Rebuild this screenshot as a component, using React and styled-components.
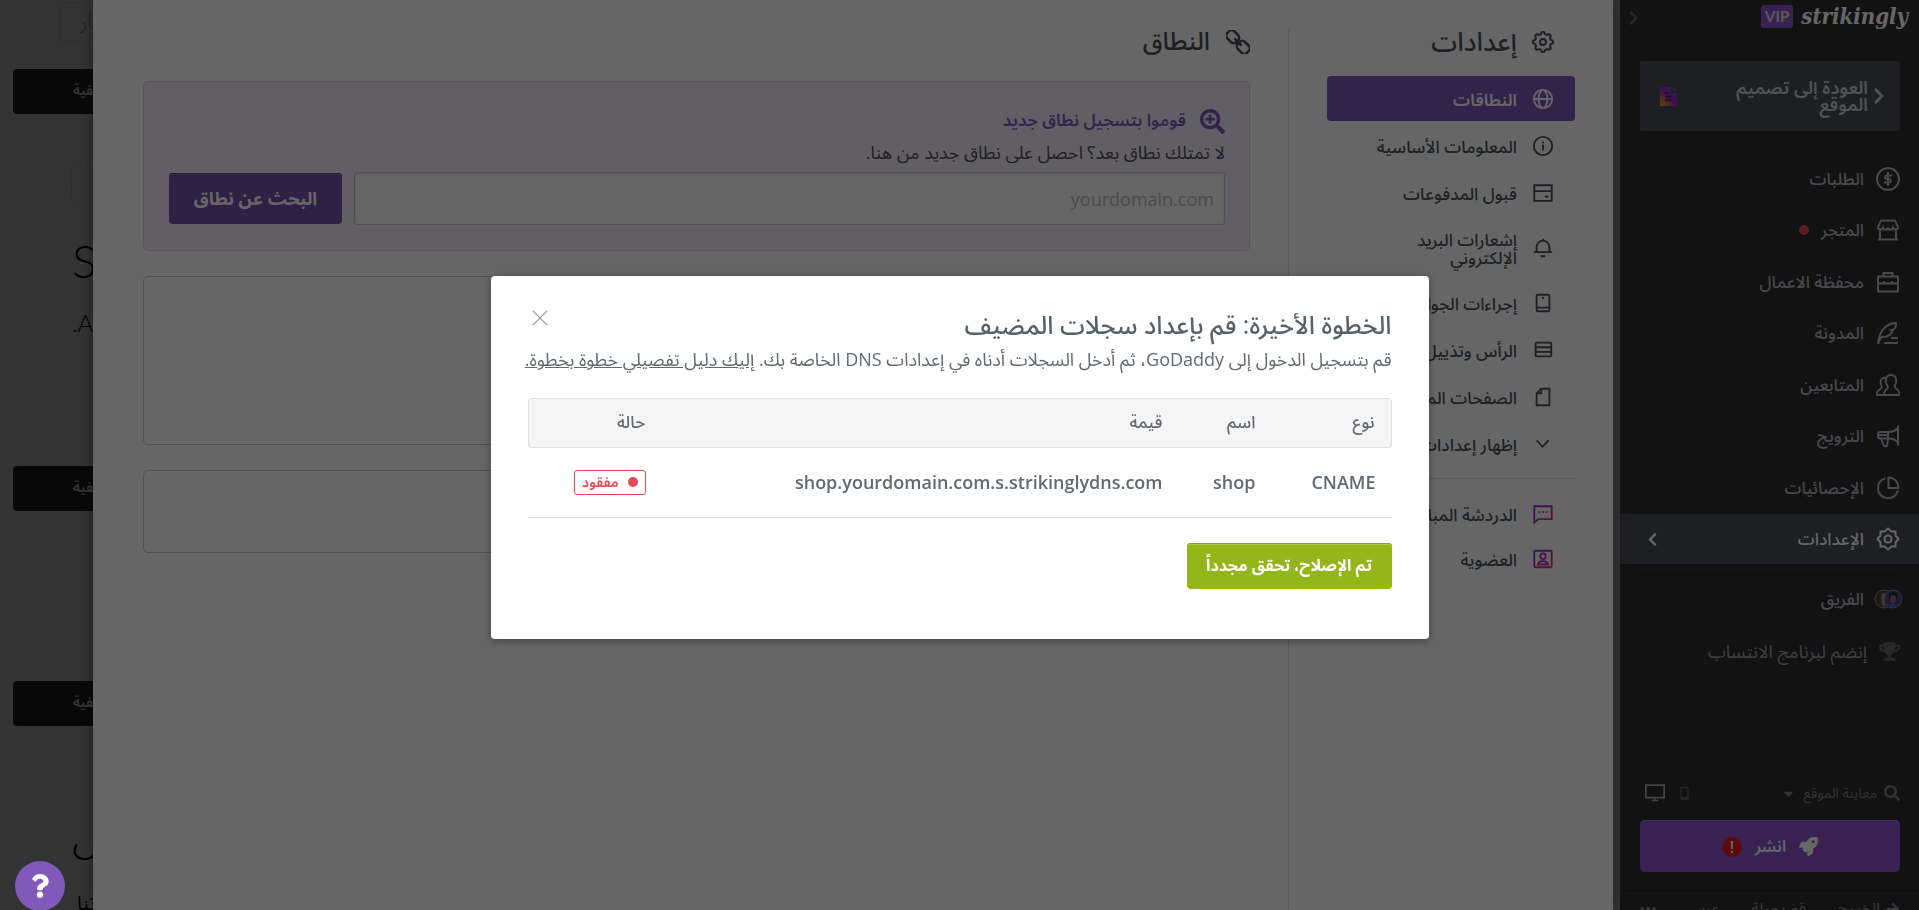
import React from 'react';
import styled, { createGlobalStyle } from 'styled-components';
import {
  FaTrophy,
  FaSearch,
  FaSearchPlus,
  FaRocket,
  FaCaretDown,
  FaMobileAlt,
  FaArrowRight,
  FaChevronLeft,
  FaChevronRight,
  FaQuestion,
} from 'react-icons/fa';

const cogPath = (() => {
  const points = [];
  for (let i = 0; i < 96; i++) {
    const a = (i / 96) * Math.PI * 2;
    const r = 9 + 1.1 * Math.tanh(2 * Math.cos(8 * a));
    points.push(`${(12 + r * Math.sin(a)).toFixed(2)} ${(12 - r * Math.cos(a)).toFixed(2)}`);
  }
  return `M${points.join('L')}Z`;
})();

const Icon = ({ size = 24, stroke = 2, color = 'currentColor', children }) => (
  <svg
    width={size}
    height={size}
    viewBox="0 0 24 24"
    fill="none"
    stroke={color}
    strokeWidth={stroke}
    aria-hidden="true"
  >
    {children}
  </svg>
);

const OrdersIcon = () => (
  <Icon>
    <circle cx="12" cy="12" r="11" />
    <path d="M16 8.5H10.5a1.8 1.8 0 0 0 0 3.5h3a1.8 1.8 0 0 1 0 3.500H8M12 5v14" />
  </Icon>
);
const StoreIcon = () => (
  <Icon>
    <path d="M5 2.500h14l3 6.500c0 3-4 3.500-5 .5c-1 3-4.500 3-5 0c-.5 3-4 3-5 0c-1 3-5 2.500-5-.5zM4 12v9.500M20 12v9.500M2 21.500h20" />
  </Icon>
);
const PortfolioIcon = () => (
  <Icon>
    <path d="M2 6.500h20v15H2zM7.500 6.500V3h9v3.500M2 13.500h20M8 11v3M16 11v3" />
  </Icon>
);
const BlogIcon = () => (
  <Icon>
    <path d="M2 23C3 11 9 2.500 20 2c.5 3-.5 5-3 7h-2l1 2c-2 4-6 5-10 5c-2 1-3 4-4 7M8 22h14M15 17h7" />
  </Icon>
);
const AudienceIcon = () => (
  <Icon stroke={1.8}>
    <path d="M11 12c-2-3-2-10 4-10s6 7 4 10c-1 2 0 3 1.500 4c2 1 3 2 3 6H8c0-4 1-5 3-6c1.500-1 1-2 0-4z" />
    <path d="M10 5C5 3.500 3.500 9 5.500 13c1 2-1 3-2.500 4c-2 1-2 2-2.500 5H8" />
  </Icon>
);
const PromoteIcon = () => (
  <Icon>
    <path d="M22 1.500v20M22 4c-3 3-6 4-9 4H4a2 2 0 0 0-2 2v2.500a2 2 0 0 0 2 2h9c3 0 6 1 9 4M12 8v6.500M2 11h10M5 14.500l3 7.500h3l1-7" />
  </Icon>
);
const StatsIcon = () => (
  <Icon>
    <path d="M9.500 2.200A10.200 10.200 0 1 0 22 14.500M12.500 1.500V12H22.500A10 10 0 0 0 12.500 1.500z" />
  </Icon>
);
const SettingsIcon = () => (
  <Icon>
    <path d="M12 1.500L15.500 4.500H19.500V8.500L22.500 12L19.500 15.500V19.500H15.500L12 22.500L8.500 19.500H4.500V15.500L1.500 12L4.500 8.500V4.500H8.500Z" />
    <circle cx="12" cy="12" r="3.500" />
  </Icon>
);
const CogIcon = () => (
  <Icon>
    <path d={cogPath} />
    <circle cx="12" cy="12" r="3" />
  </Icon>
);
const GlobeIcon = () => (
  <Icon size={22}>
    <circle cx="12" cy="12" r="10" />
    <path d="M2 12h20M10.500 2C6 8 6 16 10.500 22M13.500 2c4.500 6 4.500 14 0 20" />
  </Icon>
);
const InfoIcon = () => (
  <Icon size={22}>
    <circle cx="12" cy="12" r="10" />
    <path d="M12 10.500V17M12 7v2" />
  </Icon>
);
const PaymentIcon = () => (
  <Icon size={22}>
    <path d="M2.500 3.500h19v17h-19zM2.500 10h19M14 16h4" />
  </Icon>
);
const BellIcon = () => (
  <Icon size={22}>
    <path d="M2 16.500h20M5 16.500V11a7 7 0 0 1 14 0v5.500M12 2v2M9.500 21h5" />
  </Icon>
);
const MobileActionsIcon = () => (
  <Icon size={22}>
    <rect x="5" y="3" width="14" height="18" rx="1" />
    <path d="M5 17h14M11 6.500h2" />
  </Icon>
);
const HeaderFooterIcon = () => (
  <Icon size={22}>
    <rect x="4" y="4" width="17" height="15" rx="1" />
    <path d="M4 9h17M4 14h17" />
  </Icon>
);
const PageIcon = () => (
  <Icon size={22}>
    <path d="M10 3h9v18H5V8zM10 3v5H5" />
  </Icon>
);
const DownIcon = () => (
  <Icon size={22}>
    <path d="M5 8l6.500 7L18 8" />
  </Icon>
);
const PinkGradient = ({ id }) => (
  <defs>
    <linearGradient id={id} x1="0" y1="0" x2="1" y2="1">
      <stop offset="0" stopColor="#8a2be2" />
      <stop offset="1" stopColor="#e8308a" />
    </linearGradient>
  </defs>
);
const ChatIcon = () => (
  <Icon size={22} color="url(#chat)">
    <PinkGradient id="chat" />
    <path d="M2.500 3.500h19v14H7l-4.500 4zM7 10h2M11 10h2M15 10h2" />
  </Icon>
);
const MembershipIcon = () => (
  <Icon size={22} color="url(#member)">
    <PinkGradient id="member" />
    <rect x="2.500" y="3" width="19" height="18" rx="1" />
    <circle cx="12" cy="9" r="3" />
    <path d="M6.500 18c1-5 10-5 11 0z" />
  </Icon>
);
const ChainIcon = () => (
  <Icon size={24} stroke={2.6}>
    <g transform="rotate(45 12 12)">
      <rect x="-2" y="7" width="13" height="10" rx="4" />
      <rect x="13" y="7" width="13" height="10" rx="4" />
      <path d="M7 12h10" />
    </g>
  </Icon>
);
const DesktopIcon = () => (
  <Icon size={20}>
    <path d="M1 2.500h22v15H1zM12 18v3M8 21h8" />
  </Icon>
);
const DocIcon = () => (
  <svg width="17" height="19" viewBox="0 0 17 19" aria-hidden="true">
    <defs>
      <linearGradient id="doc" x1="1" y1="0" x2="0" y2="1">
        <stop offset="0" stopColor="#3a6cf0" />
        <stop offset=".5" stopColor="#b01fc4" />
        <stop offset="1" stopColor="#f5b400" />
      </linearGradient>
    </defs>
    <path d="M0 0h11v6h6v13H0zM13 0l4 4h-4z" fill="url(#doc)" />
    <path d="M5 6h3M5 9.500h7M5 13h7" stroke="#3b2440" strokeWidth="1.500" />
  </svg>
);
const TeamIcon = () => (
  <svg width="29" height="20" viewBox="0 0 29 20" aria-hidden="true">
    <circle cx="10" cy="10" r="9" fill="#4a4342" stroke="#8a8a8f" />
    <path d="M8 5c3-3 6 1 4 5c2 3 0 6-2 8c-3-2-3-9-2-13z" fill="#b08d7e" />
    <circle cx="19" cy="10" r="9" fill="#474a80" stroke="#8a8a8f" />
    <path d="M15 6c1-4 8-4 8 0v4h-8z" fill="#1d2338" />
    <ellipse cx="19" cy="10" rx="3" ry="4" fill="#8b6b72" />
    <path d="M14 18c1-4 9-4 10 0z" fill="#3d62b8" />
  </svg>
);

const sideItems = [
  { label: 'الطلبات', icon: <OrdersIcon /> },
  { label: 'المتجر', icon: <StoreIcon />, dot: true },
  { label: 'محفظة الاعمال', icon: <PortfolioIcon /> },
  { label: 'المدونة', icon: <BlogIcon /> },
  { label: 'المتابعين', icon: <AudienceIcon /> },
  { label: 'الترويج', icon: <PromoteIcon /> },
  { label: 'الإحصائيات', icon: <StatsIcon /> },
  { label: 'الإعدادات', icon: <SettingsIcon />, active: true },
];

const settingItems = [
  { label: 'النطاقات', icon: <GlobeIcon />, active: true },
  { label: 'المعلومات الأساسية', icon: <InfoIcon /> },
  { label: 'قبول المدفوعات', icon: <PaymentIcon /> },
  { label: 'إشعارات البريد الإلكتروني', icon: <BellIcon />, tall: true },
  { label: 'إجراءات الجوال', icon: <MobileActionsIcon /> },
  { label: 'الرأس وتذييل', icon: <HeaderFooterIcon /> },
  { label: 'الصفحات المخصصة', icon: <PageIcon /> },
  { label: 'إظهار إعدادات', icon: <DownIcon /> },
];

const extraItems = [
  { label: 'الدردشة المباشرة', icon: <ChatIcon /> },
  { label: 'العضوية', icon: <MembershipIcon /> },
];

function EditorPage() {
  return (
    <Canvas aria-hidden="true">
      <DashedBox $top={2} $left={59} $height={40}>شعار</DashedBox>
      <BackgroundButton $top={27}>الخلفية</BackgroundButton>
      <DashedBox $top={50} $left={71} $height={39} />
      <BigText>S</BigText>
      <MidText>.A</MidText>
      <BackgroundButton $top={130}>الخلفية</BackgroundButton>
      <BackgroundButton $top={170}>الخلفية</BackgroundButton>
      <ArabicTitle>س</ArabicTitle>
      <ArabicText>تنا</ArabicText>
    </Canvas>
  );
}

function Sidebar() {
  return (
    <SideWrapper>
      <LogoRow>
        <Logo>strikingly</Logo>
        <Vip>VIP</Vip>
        <Collapse aria-label="طي القائمة">
          <FaChevronRight size={16} />
        </Collapse>
      </LogoRow>
      <BackCard href="#design">
        <FaChevronRight size={18} />
        <span>العودة إلى تصميم الموقع</span>
        <DocIcon />
      </BackCard>
      <SideNav>
        {sideItems.map((item) => (
          <SideLink key={item.label} href="#nav" $active={item.active}>
            {item.icon}
            <span>{item.label}</span>
            {item.dot && <Dot $size={10} />}
            {item.active && <FaChevronLeft size={15} />}
          </SideLink>
        ))}
      </SideNav>
      <SideLine />
      <SideLink href="#team">
        <TeamSlot>
          <TeamIcon />
        </TeamSlot>
        <span>الفريق</span>
      </SideLink>
      <SideLink href="#affiliate" $light>
        <FaTrophy size={21} />
        <span>إنضم لبرنامج الانتساب</span>
      </SideLink>
      <SideBottom>
        <PreviewRow>
          <FaSearch size={16} />
          <span>معاينة الموقع</span>
          <FaCaretDown size={15} />
          <Devices>
            <FaMobileAlt size={13} />
            <DesktopIcon />
          </Devices>
        </PreviewRow>
        <Publish>
          <FaRocket size={19} />
          انشر
          <Warn>!</Warn>
        </Publish>
        <SideFooter>
          <a href="#logout">
            <FaArrowRight size={14} /> الخروج
          </a>
          <a href="#tour">قم بجولة</a>
          <a href="#lang">عربي</a>
          <a href="#more">•••</a>
        </SideFooter>
      </SideBottom>
    </SideWrapper>
  );
}

function SettingsPanel() {
  return (
    <Panel>
      <SettingsNav>
        <NavTitle>
          <CogIcon />
          إعدادات
        </NavTitle>
        <NavGroup $gap={2}>
          {settingItems.map((item) => (
            <NavLink key={item.label} href="#setting" $active={item.active} $tall={item.tall}>
              {item.icon}
              <span>{item.label}</span>
            </NavLink>
          ))}
        </NavGroup>
        <NavLine />
        <NavGroup $gap={0}>
          {extraItems.map((item) => (
            <NavLink key={item.label} href="#setting">
              {item.icon}
              <span>{item.label}</span>
            </NavLink>
          ))}
        </NavGroup>
      </SettingsNav>
      <DomainSection>
        <SectionTitle>
          <ChainIcon />
          النطاق
        </SectionTitle>
        <RegisterBox>
          <RegisterTitle>
            <FaSearchPlus size={25} />
            قوموا بتسجيل نطاق جديد
          </RegisterTitle>
          <RegisterText>لا تمتلك نطاق بعد؟ احصل على نطاق جديد من هنا.</RegisterText>
          <SearchRow>
            <DomainInput type="text" aria-label="نطاق جديد" placeholder="yourdomain.com" />
            <SearchButton>البحث عن نطاق</SearchButton>
          </SearchRow>
        </RegisterBox>
        <EmptyBox $height={169} />
        <EmptyBox $height={83} />
      </DomainSection>
    </Panel>
  );
}

function DnsModal() {
  return (
    <Modal role="dialog" aria-labelledby="dns-title">
      <ModalHeader>
        <ModalTitle id="dns-title">الخطوة الأخيرة: قم بإعداد سجلات المضيف</ModalTitle>
        <CloseButton aria-label="إغلاق">
          <Icon size={16} stroke={1.8}>
            <path d="M1 1L23 23M23 1L1 23" />
          </Icon>
        </CloseButton>
      </ModalHeader>
      <ModalText>
        قم بتسجيل الدخول إلى GoDaddy، ثم أدخل السجلات أدناه في إعدادات DNS الخاصة بك.{' '}
        <a href="#guide">إليك دليل تفصيلي خطوة بخطوة.</a>
      </ModalText>
      <Records>
        <colgroup>
          <col width="120" />
          <col width="93" />
          <col />
          <col width="134" />
        </colgroup>
        <thead>
          <tr>
            <th>نوع</th>
            <th>اسم</th>
            <th>قيمة</th>
            <th>حالة</th>
          </tr>
        </thead>
        <tbody>
          <tr>
            <td>CNAME</td>
            <td>shop</td>
            <td>shop.yourdomain.com.s.strikinglydns.com</td>
            <td>
              <Status>
                <Dot $size={10} />
                مفقود
              </Status>
            </td>
          </tr>
        </tbody>
      </Records>
      <RecheckButton>تم الإصلاح، تحقق مجدداً</RecheckButton>
    </Modal>
  );
}

export default function App() {
  return (
    <Page dir="rtl" lang="ar">
      <GlobalStyle />
      <Sidebar />
      <SettingsPanel />
      <EditorPage />
      <Overlay>
        <DnsModal />
      </Overlay>
      <HelpButton aria-label="مساعدة">
        <FaQuestion size={24} />
      </HelpButton>
    </Page>
  );
}

const GlobalStyle = createGlobalStyle`
  * {
    box-sizing: border-box;
  }
  body {
    margin: 0;
    overflow: hidden;
    font-family: "Open Sans", "Noto Sans Arabic", "Noto Sans", "DejaVu Sans", sans-serif;
    font-size: 16px;
    color: #636972;
  }
  a {
    color: inherit;
    text-decoration: none;
  }
  button, input {
    font: inherit;
  }
  button {
    border: 0;
    padding: 0;
    cursor: pointer;
  }
  svg {
    flex: none;
  }
`;

const Page = styled.div`
  display: flex;
  height: 100vh;
  overflow: hidden;
  background: #808080;
`;

const Canvas = styled.div`
  direction: ltr;
  width: 93px;
  height: 100vh;
  overflow: hidden;
  color: #000;
  white-space: nowrap;
`;

const DashedBox = styled.div`
  width: 160px;
  height: ${(p) => p.$height}px;
  margin-top: ${(p) => p.$top}px;
  margin-left: ${(p) => p.$left}px;
  padding-left: 20px;
  border: 1px dashed #6c6c6c;
  border-radius: 4px;
  font-size: 20px;
  line-height: 38px;
  color: #555;
`;

const BackgroundButton = styled.div`
  width: 160px;
  height: 45px;
  margin-top: ${(p) => p.$top}px;
  margin-left: 13px;
  padding-left: 60px;
  border-radius: 4px;
  background: #161616;
  color: #808080;
  font-size: 14px;
  font-weight: 600;
  line-height: 41px;
`;

const BigText = styled.div`
  margin-top: 28px;
  padding-left: 72px;
  font-family: Lato, sans-serif;
  font-size: 46px;
  font-weight: 300;
  line-height: 60px;
`;

const MidText = styled.div`
  margin-top: 18px;
  padding-left: 72px;
  font-family: Lato, sans-serif;
  font-size: 24px;
  font-weight: 300;
  line-height: 27px;
`;

const ArabicTitle = styled.div`
  margin-top: 80px;
  padding-left: 72px;
  font-size: 40px;
  font-weight: 300;
  line-height: 60px;
`;

const ArabicText = styled.div`
  margin-top: 20px;
  padding-left: 77px;
  font-size: 20px;
  line-height: 34px;
`;

const SideWrapper = styled.aside`
  display: flex;
  flex-direction: column;
  flex: none;
  width: 299px;
  height: 100vh;
  overflow: hidden;
  background: #2e2e2f;
  color: #b4b7c0;
`;

const LogoRow = styled.div`
  display: flex;
  align-items: center;
  height: 32px;
  padding: 0 11px 0 6px;
`;

const Logo = styled.span`
  font-family: "DejaVu Serif Condensed", "DejaVu Serif", serif;
  font-size: 22px;
  font-style: italic;
  font-weight: 700;
  color: #fff;
`;

const Vip = styled.span`
  margin-right: 8px;
  padding: 0 4px;
  border-radius: 3px;
  background: #9153cf;
  color: #e0e0e0;
  font-family: Lato, sans-serif;
  font-size: 15px;
  font-weight: 700;
  line-height: 23px;
`;

const Collapse = styled.button`
  display: flex;
  align-self: flex-end;
  margin-right: auto;
  padding-bottom: 6px;
  background: none;
  color: #5c616c;
`;

const BackCard = styled.a`
  display: flex;
  align-items: center;
  height: 70px;
  margin: 29px 19px 23px 20px;
  padding: 0 12px 0 20px;
  border-radius: 3px;
  background: #4b4e57;
  color: #c9ccd2;
  font-size: 18px;
  font-weight: 600;
  line-height: 17px;

  span {
    width: 150px;
    margin-right: 2px;
  }
  svg:last-child {
    margin-right: auto;
  }
`;

const SideNav = styled.nav`
  a:nth-child(even):not(:last-child) {
    margin-bottom: 2px;
  }
  a:nth-child(odd) {
    margin-bottom: 1px;
  }
`;

const SideLink = styled.a`
  display: flex;
  align-items: center;
  gap: 12px;
  height: ${(p) => (p.$light ? 54 : 50)}px;
  padding: 0 19px 0 25px;
  background: ${(p) => (p.$active ? '#4b4e57' : 'transparent')};
  color: ${(p) => (p.$active ? '#fff' : p.$light ? '#9a9da6' : '#b4b7c0')};
  font-size: ${(p) => (p.$light ? 18 : 17)}px;
  font-weight: ${(p) => (p.$light ? 400 : 500)};

  span {
    padding-top: 2px;
  }
  svg {
    opacity: ${(p) => (p.$light ? 0.5 : 1)};
  }
  svg:last-child {
    margin-right: auto;
  }
`;

const TeamSlot = styled.div`
  display: flex;
  justify-content: center;
  width: 24px;
`;

const Dot = styled.i`
  flex: none;
  width: ${(p) => p.$size}px;
  height: ${(p) => p.$size}px;
  border-radius: 50%;
  background: #e8484f;
`;

const SideLine = styled.hr`
  width: 260px;
  margin: 5px auto 4px;
  border: 0;
  border-top: 1px solid #3c3c3e;
`;

const SideBottom = styled.div`
  margin-top: auto;
  margin-bottom: -14px;
`;

const PreviewRow = styled.div`
  display: flex;
  align-items: center;
  gap: 7px;
  height: 30px;
  margin: 0 19px 12px 20px;
  color: #7b7e86;
  font-size: 14px;
`;

const Devices = styled.div`
  display: flex;
  align-items: center;
  gap: 13px;
  margin: 0 auto 0 5px;
  color: #a8abb2;

  svg:first-child {
    opacity: 0.4;
  }
`;

const Publish = styled.button`
  display: flex;
  align-items: center;
  justify-content: center;
  gap: 13px;
  width: 260px;
  height: 52px;
  margin: 0 19px 21px;
  border-top: 1px solid #a877dc;
  border-radius: 5px;
  background: #9153cf;
  color: #fff;
  font-weight: 600;
`;

const Warn = styled.span`
  width: 20px;
  height: 20px;
  border-radius: 50%;
  background: #e81b23;
  line-height: 20px;
`;

const SideFooter = styled.div`
  display: flex;
  align-items: center;
  justify-content: space-between;
  height: 31px;
  padding: 0 19px;
  border-top: 1px solid #3c3c3e;
  color: #8b8e96;
  font-size: 16px;

  a {
    display: flex;
    align-items: center;
    gap: 6px;
  }
`;

const Panel = styled.main`
  display: flex;
  align-items: flex-start;
  flex: 1;
  min-width: 0;
  height: 100vh;
  margin-right: 7px;
  padding: 19px 38px 0 50px;
  background: #fff;
  box-shadow: 0 0 14px rgba(0, 0, 0, 0.4);
`;

const SettingsNav = styled.nav`
  flex: none;
  width: 287px;
  height: 100vh;
  margin-top: 10px;
  padding-left: 38px;
  border-left: 1px solid #dcdee2;
`;

const NavTitle = styled.h2`
  display: flex;
  align-items: center;
  gap: 14px;
  height: 26px;
  margin: 0 20px 21px 0;
  color: #4b5058;
  font-size: 26px;
  font-weight: 500;
`;

const NavGroup = styled.div`
  display: flex;
  flex-direction: column;
  gap: ${(p) => p.$gap}px;
`;

const NavLink = styled.a`
  display: flex;
  align-items: center;
  gap: 15px;
  height: ${(p) => (p.$tall ? 61 : 45)}px;
  padding: 0 21px;
  border-radius: 4px;
  background: ${(p) => (p.$active ? '#8159bb' : 'transparent')};
  color: ${(p) => (p.$active ? '#fff' : '#4b5058')};
  font-size: 17px;
  font-weight: ${(p) => (p.$active ? 600 : 500)};
  line-height: 18px;

  span {
    max-width: 150px;
    padding-top: 2px;
  }
`;

const NavLine = styled.hr`
  margin: 12px 0;
  border: 0;
  border-top: 1px solid #dcdee2;
`;

const DomainSection = styled.section`
  flex: 1;
  min-width: 0;
  margin-right: 38px;
`;

const SectionTitle = styled.h2`
  display: flex;
  align-items: center;
  gap: 16px;
  height: 46px;
  margin: 0 0 16px;
  color: #4b5058;
  font-size: 25px;
  font-weight: 500;
`;

const RegisterBox = styled.div`
  padding: 26px 24px 25px 25px;
  border: 1px solid #dccff0;
  border-radius: 5px;
  background: #f5ecff;
`;

const RegisterTitle = styled.h3`
  display: flex;
  align-items: center;
  gap: 14px;
  margin: 0;
  height: 26px;
  color: #8159bb;
  font-size: 17px;
  font-weight: 600;
`;

const RegisterText = styled.p`
  margin: 5px 0 7px;
  color: #4b5058;
  font-size: 18px;
  line-height: 26px;
`;

const SearchRow = styled.div`
  display: flex;
  align-items: center;
  gap: 12px;
`;

const DomainInput = styled.input`
  flex: 1;
  min-width: 0;
  height: 53px;
  padding: 0 10px;
  border: 1px solid #c6c9cd;
  border-radius: 3px;
  background: #fff;
  box-shadow: inset 0 1px 3px rgba(0, 0, 0, 0.15);
  font-size: 18px;

  &::placeholder {
    color: #bbb;
  }
`;

const SearchButton = styled.button`
  width: 173px;
  height: 51px;
  border-radius: 4px;
  background: #7850a8;
  box-shadow: inset 0 1px 0 #60408a, inset 0 2px 0 #9068c0;
  color: #fff;
  font-size: 18px;
  font-weight: 700;
`;

const EmptyBox = styled.div`
  height: ${(p) => p.$height}px;
  margin-top: 25px;
  border: 1px solid #c6c9cd;
  border-radius: 5px;
`;

const Overlay = styled.div`
  position: fixed;
  inset: 0;
  display: flex;
  align-items: center;
  justify-content: center;
  padding-top: 5px;
  background: rgba(0, 0, 0, 0.6);
`;

const Modal = styled.section`
  width: 938px;
  max-width: 100%;
  padding: 31px 37px 50px;
  border-radius: 4px;
  background: #fff;
  box-shadow: 0 2px 10px rgba(0, 0, 0, 0.35);
`;

const ModalHeader = styled.header`
  display: flex;
  align-items: flex-start;
  justify-content: space-between;
  height: 38px;
`;

const ModalTitle = styled.h1`
  margin: 0;
  color: #55626c;
  font-size: 25px;
  font-weight: 500;
  line-height: 34px;
`;

const CloseButton = styled.button`
  display: flex;
  margin: 3px 0 0 4px;
  background: none;
  color: #999;
`;

const ModalText = styled.p`
  margin: 0 0 24px;
  font-size: 18px;
  line-height: 29px;
  white-space: nowrap;

  a {
    text-decoration: underline;
  }
`;

const Records = styled.table`
  width: 100%;
  margin-bottom: 25px;
  border-spacing: 0;
  table-layout: fixed;

  th, td {
    padding: 0 16px;
    text-align: right;
    white-space: nowrap;
  }
  th {
    height: 50px;
    border: solid #e0e2e6;
    border-width: 1px 0;
    background: #f5f5f5;
    font-size: 17px;
    font-weight: 500;
  }
  th:first-child {
    border-right-width: 1px;
    border-radius: 0 4px 4px 0;
  }
  th:last-child {
    border-left-width: 1px;
    border-radius: 4px 0 0 4px;
  }
  td {
    height: 70px;
    padding-bottom: 2px;
    border-bottom: 1px solid #e0e2e6;
    font-size: 18px;
    font-weight: 600;
  }
`;

const Status = styled.span`
  display: inline-flex;
  align-items: center;
  gap: 9px;
  height: 25px;
  padding: 0 7px;
  border: 1px solid #e8484f;
  border-radius: 3px;
  color: #e8484f;
  font-size: 14px;
  font-weight: 600;
  vertical-align: middle;
`;

const RecheckButton = styled.button`
  display: block;
  width: 205px;
  height: 46px;
  border-radius: 4px;
  background: #93b719;
  box-shadow: inset 0 1px 0 #86a815, inset 0 2px 0 #afcf4a;
  color: #fff;
  font-size: 16px;
  font-weight: 700;
`;

const HelpButton = styled.button`
  position: fixed;
  left: 15px;
  bottom: -1px;
  display: flex;
  align-items: center;
  justify-content: center;
  width: 50px;
  height: 50px;
  border-radius: 50%;
  background: #8159bb;
  color: #fff;
`;
